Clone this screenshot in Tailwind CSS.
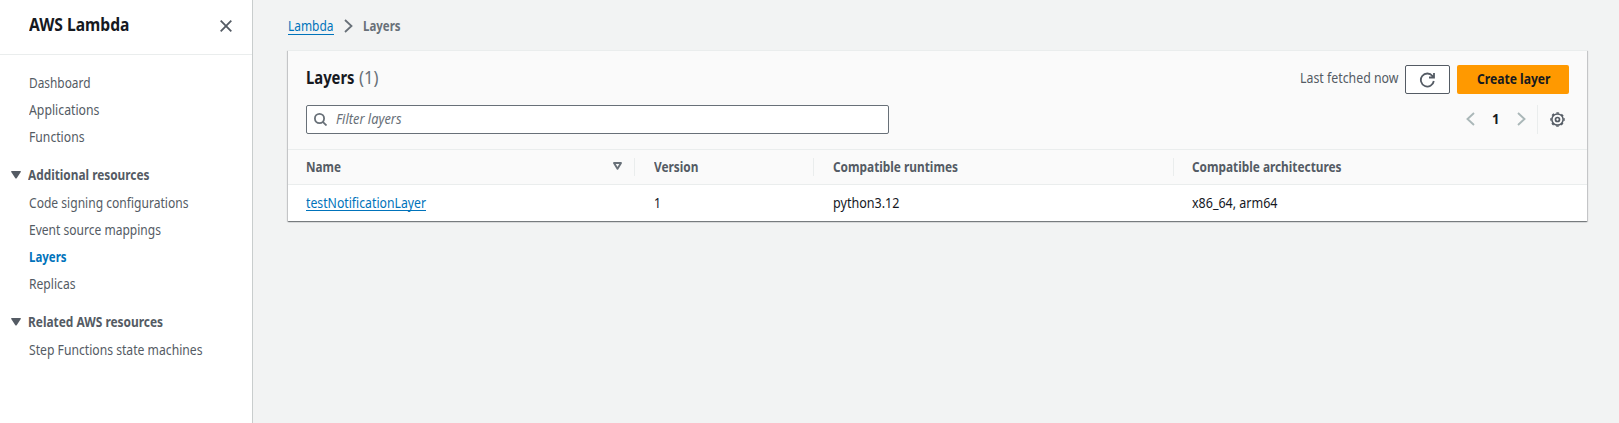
<!DOCTYPE html>
<html lang="en">
<head>
<meta charset="utf-8">
<title>AWS Lambda - Layers</title>
<script src="https://cdn.jsdelivr.net/npm/@tailwindcss/browser@4"></script>
</head>
<body class="flex h-[423px] overflow-hidden bg-[#f2f3f3] font-['Noto_Sans',sans-serif] text-[13.5px] leading-[22px] whitespace-nowrap text-[#16191f]">
<aside class="h-full w-[253px] shrink-0 border-r border-[#c9cdcd] bg-white text-[#545b64]">
  <header class="flex h-[55px] items-start justify-between border-b border-[#eaeded] pl-[29px] pr-[20px] pt-[13px]">
    <h1 class="text-[17.5px] font-bold text-[#16191f]"><span class="inline-block origin-left" data-w="100.500">AWS Lambda</span></h1>
    <svg class="mt-[7px] size-[12px]" viewBox="0 0 12 12" fill="none" stroke="#545b64" stroke-width="1.800"><path d="M.7.7l10.600 10.600M11.300.7L.7 11.300"/></svg>
  </header>
  <nav class="pt-[15px] leading-[27px]">
    <ul class="pl-[29px]">
      <li><span class="inline-block origin-left" data-w="61.500">Dashboard</span></li>
      <li><span class="inline-block origin-left" data-w="70.500">Applications</span></li>
      <li><span class="inline-block origin-left" data-w="55.500">Functions</span></li>
    </ul>
    <h2 class="mt-[11px] flex items-start pl-[11px] font-bold"><svg class="mr-[7px] mt-[9px] h-[8px] w-[10px]" viewBox="0 0 9 8" preserveAspectRatio="none" fill="#545b64"><path d="M.6 0h7.800q.8 0 .4.900L5.100 7.200q-.6.800-1.200 0L.2.900Q-.2 0 .6 0z"/></svg><span class="inline-block origin-left" data-w="121.500">Additional resources</span></h2>
    <ul class="mt-px pl-[29px]">
      <li><span class="inline-block origin-left" data-w="159.500">Code signing configurations</span></li>
      <li><span class="inline-block origin-left" data-w="132">Event source mappings</span></li>
      <li class="font-bold text-[#0073bb]"><span class="inline-block origin-left" data-w="37.500">Layers</span></li>
      <li><span class="inline-block origin-left" data-w="46.500">Replicas</span></li>
    </ul>
    <h2 class="mt-[11px] flex items-start pl-[11px] font-bold"><svg class="mr-[7px] mt-[9px] h-[8px] w-[10px]" viewBox="0 0 9 8" preserveAspectRatio="none" fill="#545b64"><path d="M.6 0h7.800q.8 0 .4.900L5.100 7.200q-.6.800-1.200 0L.2.900Q-.2 0 .6 0z"/></svg><span class="inline-block origin-left" data-w="135">Related AWS resources</span></h2>
    <ul class="mt-px pl-[29px]">
      <li><span class="inline-block origin-left" data-w="173.500">Step Functions state machines</span></li>
    </ul>
  </nav>
</aside>
<main class="flex-1 pl-[35px] pr-[32px] pt-[15px]">
  <div class="flex h-[22px] items-start">
    <a class="h-[20px] border-b border-[#0073bb] text-[#0073bb]"><span class="inline-block origin-left" data-w="45.500">Lambda</span></a>
    <svg class="ml-[10px] mt-[4px] h-[14px] w-[9px]" viewBox="0 0 9 14" fill="none" stroke="#687078" stroke-width="1.800"><path d="M1 1l6.500 6L1 13"/></svg>
    <span class="ml-[10px] font-bold text-[#687078]"><span class="inline-block origin-left" data-w="37.500">Layers</span></span>
  </div>
  <section class="mt-[13px] h-[171px] bg-white shadow-[0_1px_1px_0_rgba(22,25,31,0.38),1px_1px_1px_0_rgba(22,25,31,0.15),-1px_1px_1px_0_rgba(22,25,31,0.15)]">
    <div class="h-[100px] border-b border-[#eaeded] border-t bg-[#fafafa] pl-[18px] pr-[18px]">
      <div class="flex h-[54px] items-start justify-between pt-[14px]">
        <h2 class="flex gap-[4px] pt-[1px] text-[17.5px] font-bold"><span class="inline-block origin-left" data-w="48.500">Layers</span><span class="inline-block origin-left font-normal text-[#687078]" data-w="19.500">(1)</span></h2>
        <div class="flex items-start">
          <span class="mt-[2px] text-[#545b64]"><span class="inline-block origin-left" data-w="98.500">Last fetched now</span></span>
          <button class="ml-[7px] flex h-[29px] w-[45px] items-center justify-start rounded-[2px] border border-[#545b64] bg-white pl-[13px]"><svg class="size-[16px]" viewBox="0 0 16 16" fill="none" stroke="#545b64" stroke-width="1.800"><path d="M10 5.500h5V1M14.800 9A6.500 6.500 0 1 1 13.500 4l1.200 1.500"/></svg></button>
          <button class="ml-[7px] flex h-[29px] w-[112px] items-start rounded-[2px] bg-[#ff9900] pl-[20px] pt-[3px] font-bold"><span class="inline-block origin-left" data-w="73.500">Create layer</span></button>
        </div>
      </div>
      <div class="flex justify-between">
        <div class="flex h-[29px] w-[583px] items-start rounded-[2px] border border-[#687078] bg-white pl-[7px] pt-[2px] text-[#687078] italic">
          <svg class="mr-[9px] mt-[5px] size-[13px]" viewBox="0 0 13 13" fill="none" stroke="#687078" stroke-width="1.800"><circle cx="5.500" cy="5.500" r="4.600"/><path d="M8.800 8.800l3.700 3.700"/></svg>
          <span class="inline-block origin-left" data-w="65.500">Filter layers</span>
        </div>
        <div class="flex h-[29px] items-start pr-[4px]">
          <svg class="mt-[7px] h-[14px] w-[9px]" viewBox="0 0 9 14" fill="none" stroke="#aab7b8" stroke-width="1.900"><path d="M8 1L1.500 7 8 13"/></svg>
          <span class="ml-[17px] mt-[3px] w-[8px] font-bold"><span class="inline-block origin-left" data-w="7.500">1</span></span>
          <svg class="ml-[17px] mt-[7px] h-[14px] w-[9px]" viewBox="0 0 9 14" fill="none" stroke="#aab7b8" stroke-width="1.900"><path d="M1 1l6.500 6L1 13"/></svg>
          <i class="ml-[11px] h-[29px] w-px bg-[#eaeded]"></i>
          <svg class="ml-[12px] mt-[7px] size-[15px]" viewBox="0 0 15 15" fill="none" stroke="#545b64"><circle cx="7.500" cy="7.500" r="5.600" stroke-width="1.500"/><circle cx="7.500" cy="7.500" r="6.600" stroke-width="1.300" stroke-dasharray="2.592 2.592" transform="rotate(-11 7.500 7.500)"/><circle cx="7.500" cy="7.500" r="2" stroke-width="1.700"/></svg>
        </div>
      </div>
    </div>
    <div class="grid h-[35px] grid-cols-[347px_179px_360px_1fr] border-b border-[#eaeded] bg-[#fafafa] font-bold text-[#545b64]">
      <div class="flex items-start justify-between pl-[18px] pt-[6px]"><span class="inline-block origin-left" data-w="35">Name</span><span class="mt-[2px] flex"><svg class="mr-[12px] mt-[4px] h-[8px] w-[9px]" viewBox="0 0 9 8" fill="none" stroke="#687078" stroke-width="1.900" stroke-linejoin="round"><path d="M1 1h7L4.500 6.800z"/></svg><i class="h-[18px] w-px bg-[#eaeded]"></i></span></div>
      <div class="flex items-start justify-between pl-[19px] pt-[6px]"><span class="inline-block origin-left" data-w="44.500">Version</span><i class="mt-[2px] h-[18px] w-px bg-[#eaeded]"></i></div>
      <div class="flex items-start justify-between pl-[19px] pt-[6px]"><span class="inline-block origin-left" data-w="125">Compatible runtimes</span><i class="mt-[2px] h-[18px] w-px bg-[#eaeded]"></i></div>
      <div class="pl-[18px] pt-[6px]"><span class="inline-block origin-left" data-w="149.500">Compatible architectures</span></div>
    </div>
    <div class="grid grid-cols-[347px_179px_360px_1fr] pt-[7px]">
      <div class="flex pl-[18px]"><a class="h-[19px] border-b border-[#0073bb] text-[#0073bb]"><span class="inline-block origin-left" data-w="120">testNotificationLayer</span></a></div>
      <div class="pl-[19px]"><span class="inline-block origin-left" data-w="7">1</span></div>
      <div class="pl-[19px]"><span class="inline-block origin-left" data-w="66.500">python3.12</span></div>
      <div class="pl-[18px]"><span class="inline-block origin-left" data-w="85.500">x86_64, arm64</span></div>
    </div>
  </section>
</main>
<script>
// Condense each label horizontally to its intended width.
function condense() {
  document.querySelectorAll('[data-w]').forEach(function (el) {
    el.style.width = 'max-content';
    var natural = el.getBoundingClientRect().width;
    var wanted = parseFloat(el.dataset.w);
    el.style.width = natural + 'px';
    el.style.flexShrink = '0';
    el.style.transform = 'scaleX(' + wanted / natural + ')';
    el.style.marginRight = (wanted - natural) + 'px';
  });
}
window.addEventListener('load', condense);
</script>
</body>
</html>
